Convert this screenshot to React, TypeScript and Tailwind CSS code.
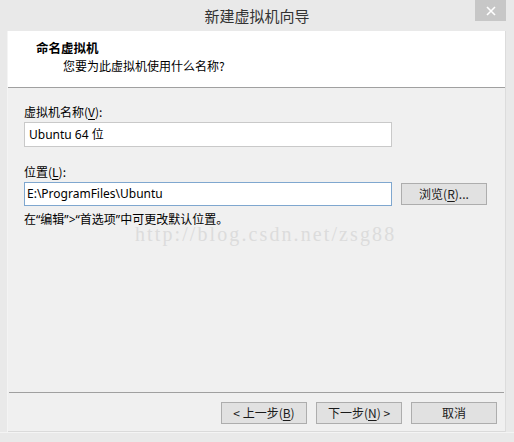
import React from 'react'

const font = { fontFamily: '"Noto Sans", "Noto Sans CJK SC", sans-serif' }

const Key = ({ k }: { k: string }) => <span className="underline underline-offset-2">{k}</span>

const Q = ({ c }: { c: string }) => <span style={font}>{c}</span>

const Btn = ({ children }: { children: React.ReactNode }) => (
  <button className="w-[86px] h-[22px] border border-[#adadad] bg-[#e1e1e1] text-[12px] leading-[20px] text-[#1a1a1a] flex items-center justify-center">
    {children}
  </button>
)

const App = () => {
  return (
    <div
      className="w-[514px] h-[442px] bg-[#e9e9e9] relative flex flex-col overflow-hidden text-black"
      style={{ fontFamily: '"Noto Sans CJK SC", "Noto Sans", sans-serif' }}>
      {/* title bar */}
      <div className="h-[31px] flex items-center justify-center relative">
        <span className="text-[15px] leading-[20px] text-[#333333]">新建虚拟机向导</span>
        <div className="absolute right-[8px] top-0 w-[31px] h-[21px] bg-[#c7c7c7] flex items-center justify-center">
          <svg width="10" height="10" viewBox="0 0 10 10">
            <path d="M1 1 L9 9 M9 1 L1 9" stroke="#ffffff" strokeWidth="1.6" />
          </svg>
        </div>
      </div>

      <div className="flex flex-1">
        <div className="w-[8px] border-r border-[#f4f4f4]" />
        {/* client */}
        <div className="w-[497px] h-[401px] bg-[#f0f0f0] flex flex-col">
          <div className="h-[57px] bg-white border-b border-[#a0a0a0] pl-[28px] pt-[9px]">
            <div className="text-[12.5px] leading-[16px] font-bold">命名虚拟机</div>
            <div className="text-[12px] leading-[16px] pl-[27px] mt-[2px]">您要为此虚拟机使用什么名称?</div>
          </div>

          <div className="pl-[16px] pt-[17px] flex flex-col">
            <div className="text-[12px] leading-[14px]">
              虚拟机名称(<Key k="V" />):
            </div>
            <div className="mt-[3px] w-[368px] h-[25px] bg-white border border-[#c9c9c9] flex items-center pl-[4px] text-[12px]" style={font}>
              Ubuntu 64 位
            </div>

            <div className="mt-[18px] text-[12px] leading-[14px]">
              位置(<Key k="L" />):
            </div>
            <div className="mt-[3px] flex items-center">
              <div className="w-[368px] h-[24px] bg-white border border-[#7fa7cf] flex items-center pl-[2px] text-[12px]" style={font}>
                E:\ProgramFiles\Ubuntu
              </div>
              <div className="ml-[9px]">
                <Btn>
                  浏览(<Key k="R" />)...
                </Btn>
              </div>
            </div>

            <div className="mt-[6px] text-[12px] leading-[14px]">
              在<Q c="“" />编辑<Q c="”>“" />首选项<Q c="”" />中可更改默认位置。
            </div>
          </div>

          <div className="flex-1" />
          <div className="mx-[1px] border-t border-[#a0a0a0]" />
          <div className="h-[39px] flex items-start justify-end pt-[9px] pr-[8px] gap-[9px] border-b border-[#dadada]">
            <Btn>
              &lt; 上一步(<Key k="B" />)
            </Btn>
            <Btn>
              下一步(<Key k="N" />) &gt;
            </Btn>
            <Btn>取消</Btn>
          </div>
        </div>
        <div className="w-[9px] border-l border-[#dcdcdc]" />
      </div>
      <div className="h-[10px] border-t border-[#f4f4f4]" />

      {/* watermark */}
      <div
        className="absolute left-[135px] top-[228px] text-[20px] leading-[12px] text-[#dcdcdc] tracking-[2.1px] pointer-events-none"
        style={{ fontFamily: '"Liberation Serif", serif' }}>
        http://blog.csdn.net/zsg88
      </div>
    </div>
  )
}

export default App
